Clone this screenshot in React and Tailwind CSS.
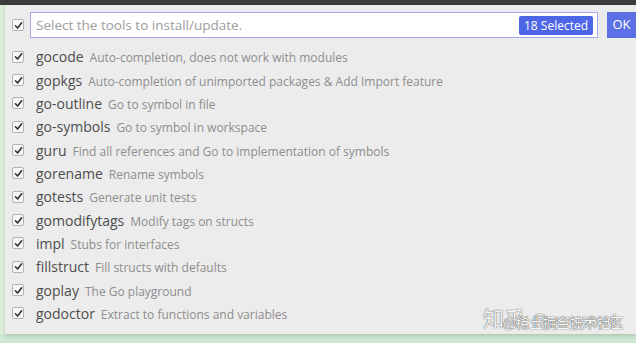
import React from 'react';

const tools = [
  ['gocode', 'Auto-completion, does not work with modules'],
  ['gopkgs', 'Auto-completion of unimported packages & Add Import feature'],
  ['go-outline', 'Go to symbol in file'],
  ['go-symbols', 'Go to symbol in workspace'],
  ['guru', 'Find all references and Go to implementation of symbols'],
  ['gorename', 'Rename symbols'],
  ['gotests', 'Generate unit tests'],
  ['gomodifytags', 'Modify tags on structs'],
  ['impl', 'Stubs for interfaces'],
  ['fillstruct', 'Fill structs with defaults'],
  ['goplay', 'The Go playground'],
  ['godoctor', 'Extract to functions and variables'],
];

const Check = () => (
  <span className="w-3 h-3 shrink-0 rounded-[2px] border border-[#b2b2b2] bg-[#f7f7f7] flex items-center justify-center">
    <svg width="9" height="9" viewBox="0 0 10 10">
      <path d="M1.6 5.3 L4 7.8 L8.5 2" fill="none" stroke="#333" strokeWidth="1.8" strokeLinecap="round" strokeLinejoin="round" />
    </svg>
  </span>
);

export default function App() {
  return (
    <div className="w-[636px] h-[343px] bg-[#cfe7d1] relative overflow-hidden" style={{ fontFamily: '"Open Sans", "Noto Sans", sans-serif' }}>
      <div className="h-[5px] bg-[#3b3b3b]" />
      <div className="flex">
        {/* bit of the editor showing on the left */}
        <div className="w-[5px] h-[330px] bg-[#dcefdc]" />
        <div className="flex-1 h-[329px] bg-[#ececec] shadow-[0_2px_4px_rgba(0,0,0,0.15)] pt-[7px] pl-[7px]">
          <div className="flex items-center gap-[6px]">
            <Check />
            <div className="flex-1 h-[26px] bg-white border border-[#aaa8ec] flex items-center pl-[5px] pr-[4px]">
              <span className="flex-1 text-[13.5px] text-[#9d9d9d]">Select the tools to install/update.</span>
              <span className="h-[19px] px-[5px] rounded-[2px] bg-[#4d66e6] text-white text-[12px] leading-[19px]">18 Selected</span>
            </div>
            <button className="ml-[3px] w-[29px] h-[26px] bg-[#5b70e4] text-white text-[13px]">OK</button>
          </div>
          <div className="mt-[7px]">
            {tools.map(([name, desc]) => (
              <div key={name} className="h-[23.35px] flex items-center gap-[12px]">
                <Check />
                <div className="flex items-baseline gap-[6px] whitespace-nowrap">
                  <span className="text-[14px] font-medium text-[#4d4d4d]">{name}</span>
                  <span className="text-[12px] text-[#8e8e8e]">{desc}</span>
                </div>
              </div>
            ))}
          </div>
        </div>
      </div>
      {/* watermark */}
      <div className="absolute left-[483px] top-[304px] flex items-baseline gap-[6px] whitespace-nowrap text-[#f4f4f4] [text-shadow:0_0_1px_#666,0_0_1px_#666]" style={{ fontFamily: '"Noto Sans CJK SC", "Noto Sans", sans-serif' }}>
        <span className="text-[21px] leading-[26px]">知乎</span>
        <span className="text-[17px] leading-[26px]" style={{ fontFamily: '"Liberation Sans", sans-serif' }}>@vcrossed</span>
      </div>
      <div className="absolute left-[503px] top-[313px] whitespace-nowrap text-[13.5px] leading-[18px] text-[#f4f4f4] [text-shadow:0_0_1px_#555,0_0_1px_#555]" style={{ fontFamily: '"Noto Sans CJK SC", "Noto Sans", sans-serif' }}>
        @稀土掘金技术社区
      </div>
    </div>
  );
}
